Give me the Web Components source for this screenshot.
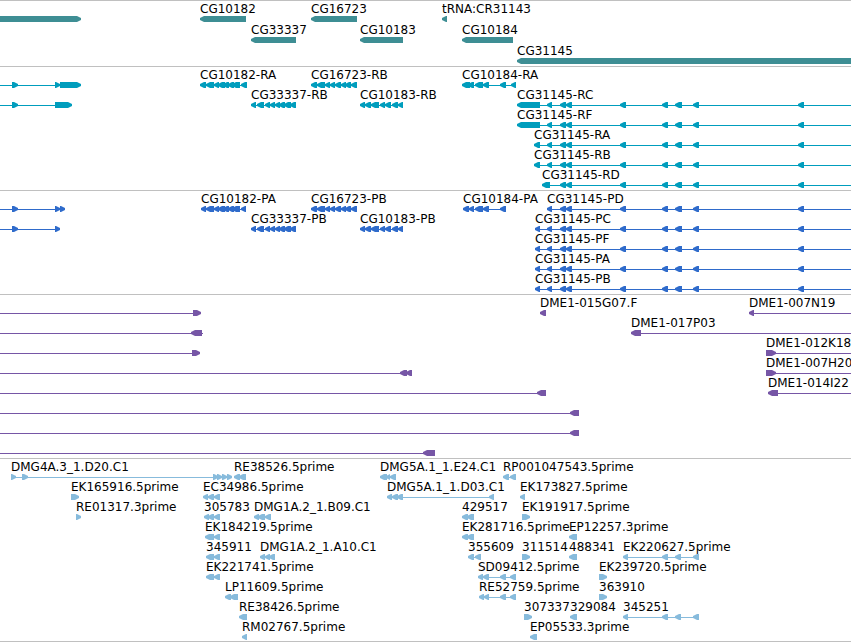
<!DOCTYPE html>
<html lang="en">
<head>
<meta charset="utf-8">
<title>Genome tracks</title>
<style>
	body{
		margin: 0;
		background: #fff;
		color: #000;
		font: 12px/16px "DejaVu Sans", sans-serif;
	}
</style>
</head>
<body>
<genome-browser>
	<genome-track color="#3e8e94" class="tall">
		<feature-row>
			<gene-feature dir="right" exons="-9-81"></gene-feature>
			<gene-feature exons="200-246">CG10182</gene-feature>
			<gene-feature exons="311-357">CG16723</gene-feature>
			<gene-feature exons="442-447">tRNA:CR31143</gene-feature>
		</feature-row>
		<feature-row>
			<gene-feature exons="251-296">CG33337</gene-feature>
			<gene-feature exons="360-403">CG10183</gene-feature>
			<gene-feature exons="462-513">CG10184</gene-feature>
		</feature-row>
		<feature-row>
			<gene-feature exons="517-edge">CG31145</gene-feature>
		</feature-row>
	</genome-track>

	<genome-track color="#009dbd">
		<feature-row>
			<gene-feature dir="right" from="0" exons="12-18 55-60 60-81"></gene-feature>
			<gene-feature exons="200-206 206-214 214-219 218-225 223-229 228-234 232-240 241-247">CG10182-RA</gene-feature>
			<gene-feature exons="311-317 317-325 325-330 330-335 335-341 341-346 345-351 351-357">CG16723-RB</gene-feature>
			<gene-feature exons="462-470 468-474 475-483 483-489 500-506 511-516">CG10184-RA</gene-feature>
		</feature-row>
		<feature-row>
			<gene-feature dir="right" from="0" exons="12-18 55-72"></gene-feature>
			<gene-feature exons="251-256 257-264 265-270 270-275 275-280 279-285 284-291 290-296">CG33337-RB</gene-feature>
			<gene-feature exons="360-365 365-371 371-379 380-385 385-391 392-398 398-403">CG10183-RB</gene-feature>
			<gene-feature to="edge" exons="517-540 547-552 560-566 566-572 620-626 662-668 675-682 693-699 798-804">CG31145-RC</gene-feature>
		</feature-row>
		<feature-row>
			<gene-feature to="edge" exons="517-540 547-552 560-566 566-572 620-626 662-668 675-682 693-699 798-804">CG31145-RF</gene-feature>
		</feature-row>
		<feature-row>
			<gene-feature to="edge" exons="534-540 547-552 560-566 566-572 620-626 662-668 675-682 693-699 798-804">CG31145-RA</gene-feature>
		</feature-row>
		<feature-row>
			<gene-feature to="edge" exons="534-540 547-552 560-566 566-572 620-626 662-668 675-682 693-699 798-804">CG31145-RB</gene-feature>
		</feature-row>
		<feature-row>
			<gene-feature to="edge" exons="542-550 560-566 566-572 620-626 662-668 675-682 693-699 798-804">CG31145-RD</gene-feature>
		</feature-row>
	</genome-track>

	<genome-track color="#2f6bcb">
		<feature-row>
			<gene-feature dir="right" from="0" exons="12-18 55-60 60-65"></gene-feature>
			<gene-feature exons="201-206 206-214 214-219 218-225 223-229 228-234 232-240 241-246">CG10182-PA</gene-feature>
			<gene-feature exons="311-317 317-325 325-330 330-335 335-341 341-346 345-351 351-357">CG16723-PB</gene-feature>
			<gene-feature exons="463-469 469-474 475-483 483-489 500-506">CG10184-PA</gene-feature>
			<gene-feature to="edge" exons="547-552 560-566 566-572 620-626 662-668 675-682 693-699 798-804">CG31145-PD</gene-feature>
		</feature-row>
		<feature-row>
			<gene-feature dir="right" from="0" exons="12-18 55-60"></gene-feature>
			<gene-feature exons="251-256 257-264 265-270 270-275 275-280 279-285 284-291 290-296">CG33337-PB</gene-feature>
			<gene-feature exons="360-365 365-371 371-379 380-385 385-391 392-398 398-403">CG10183-PB</gene-feature>
			<gene-feature to="edge" exons="535-540 547-552 560-566 566-572 620-626 662-668 675-682 693-699 798-804">CG31145-PC</gene-feature>
		</feature-row>
		<feature-row>
			<gene-feature to="edge" exons="535-540 547-552 560-566 566-572 620-626 662-668 675-682 693-699 798-804">CG31145-PF</gene-feature>
		</feature-row>
		<feature-row>
			<gene-feature to="edge" exons="535-540 547-552 560-566 566-572 620-626 662-668 675-682 693-699 798-804">CG31145-PA</gene-feature>
		</feature-row>
		<feature-row>
			<gene-feature to="edge" exons="535-540 547-552 560-566 566-572 620-626 662-668 675-682 693-699 798-804">CG31145-PB</gene-feature>
		</feature-row>
	</genome-track>

	<genome-track color="#7656a6">
		<feature-row>
			<gene-feature dir="right" from="0" exons="193-201"></gene-feature>
			<gene-feature exons="540-546">DME1-015G07.F</gene-feature>
			<gene-feature to="edge" exons="749-754">DME1-007N19</gene-feature>
		</feature-row>
		<feature-row>
			<gene-feature from="0" to="203" exons="191-202"></gene-feature>
			<gene-feature to="edge" exons="631-641">DME1-017P03</gene-feature>
		</feature-row>
		<feature-row>
			<gene-feature dir="right" from="0" exons="192-200"></gene-feature>
			<gene-feature dir="right" to="edge" exons="766-776">DME1-012K18</gene-feature>
		</feature-row>
		<feature-row>
			<gene-feature from="0" exons="400-407 406-412"></gene-feature>
			<gene-feature dir="right" to="edge" exons="766-776">DME1-007H20</gene-feature>
		</feature-row>
		<feature-row>
			<gene-feature from="0" exons="537-546"></gene-feature>
			<gene-feature to="edge" exons="768-778">DME1-014I22</gene-feature>
		</feature-row>
		<feature-row>
			<gene-feature from="0" exons="570-579"></gene-feature>
		</feature-row>
		<feature-row>
			<gene-feature from="0" exons="570-579"></gene-feature>
		</feature-row>
		<feature-row>
			<gene-feature from="0" exons="423-435"></gene-feature>
		</feature-row>
	</genome-track>

	<genome-track color="#87bbdc" class="last">
		<feature-row>
			<gene-feature dir="right" exons="11-16 22-28 213-218 217-222 222-227 227-232">DMG4A.3_1.D20.C1</gene-feature>
			<gene-feature exons="234-240 239-246">RE38526.5prime</gene-feature>
			<gene-feature exons="380-387 386-390 390-396">DMG5A.1_1.E24.C1</gene-feature>
			<gene-feature exons="503-509 510-516">RP001047543.5prime</gene-feature>
		</feature-row>
		<feature-row>
			<gene-feature dir="right" exons="71-79">EK165916.5prime</gene-feature>
			<gene-feature exons="203-208 208-214 214-220">EC34986.5prime</gene-feature>
			<gene-feature exons="387-392 392-398 397-403 489-494">DMG5A.1_1.D03.C1</gene-feature>
			<gene-feature exons="520-525">EK173827.5prime</gene-feature>
		</feature-row>
		<feature-row>
			<gene-feature dir="right" exons="76-81">RE01317.3prime</gene-feature>
			<gene-feature exons="204-209 208-214 214-220">305783</gene-feature>
			<gene-feature exons="254-259 258-265 265-271">DMG1A.2_1.B09.C1</gene-feature>
			<gene-feature exons="462-468 467-474">429517</gene-feature>
			<gene-feature dir="right" exons="522-530">EK191917.5prime</gene-feature>
		</feature-row>
		<feature-row>
			<gene-feature exons="205-214 214-220">EK184219.5prime</gene-feature>
			<gene-feature exons="462-468 467-474">EK281716.5prime</gene-feature>
			<gene-feature exons="569-577">EP12257.3prime</gene-feature>
		</feature-row>
		<feature-row>
			<gene-feature exons="206-214 214-220">345911</gene-feature>
			<gene-feature exons="260-265 265-270 269-275">DMG1A.2_1.A10.C1</gene-feature>
			<gene-feature exons="468-474 475-481">355609</gene-feature>
			<gene-feature dir="right" exons="522-530">311514</gene-feature>
			<gene-feature exons="569-577">488341</gene-feature>
			<gene-feature exons="623-628 662-668 675-681 693-699">EK220627.5prime</gene-feature>
		</feature-row>
		<feature-row>
			<gene-feature exons="206-214 214-220">EK221741.5prime</gene-feature>
			<gene-feature exons="478-483 483-489 500-506 510-516">SD09412.5prime</gene-feature>
			<gene-feature dir="right" exons="599-607">EK239720.5prime</gene-feature>
		</feature-row>
		<feature-row>
			<gene-feature exons="225-231 230-238">LP11609.5prime</gene-feature>
			<gene-feature exons="479-484 484-489 500-506 510-516">RE52759.5prime</gene-feature>
			<gene-feature dir="right" exons="599-607">363910</gene-feature>
		</feature-row>
		<feature-row>
			<gene-feature exons="239-247">RE38426.5prime</gene-feature>
			<gene-feature dir="right" exons="524-532">307337</gene-feature>
			<gene-feature exons="570-577">329084</gene-feature>
			<gene-feature exons="623-628 662-668 675-681 693-699">345251</gene-feature>
		</feature-row>
		<feature-row>
			<gene-feature exons="242-247">RM02767.5prime</gene-feature>
			<gene-feature exons="530-537">EP05533.3prime</gene-feature>
		</feature-row>
	</genome-track>
</genome-browser>

<script>
(function(d){

	function makeTemplate(html){
		const template = d.createElement('template');
		template.innerHTML = html;
		return template;
	}

	const browserTemplate = makeTemplate(`
	<style>
		:host{
			display: flex;
			flex-direction: column;
			border-bottom: 1px solid #c0c0c0;
		}
	</style>
	<slot></slot>
	`);

	const trackTemplate = makeTemplate(`
	<style>
		:host{
			display: flex;
			flex-direction: column;
			overflow: hidden;
			border-top: 1px solid #c0c0c0;
			padding-bottom: 3px;
			--row-height: 20px;
		}
		:host(.tall){
			padding-bottom: 2px;
			--row-height: 21px;
		}
		:host(.last){
			padding-bottom: 2px;
		}
	</style>
	<slot></slot>
	`);

	const rowTemplate = makeTemplate(`
	<style>
		:host{
			display: block;
			position: relative;
			height: var(--row-height);
		}
	</style>
	<slot></slot>
	`);

	// a feature is placed on the row by its base position
	const featureTemplate = makeTemplate(`
	<style>
		:host{
			display: block;
			position: absolute;
			inset: 0;
			pointer-events: none;
		}
		.name{
			position: absolute;
			top: 0;
			left: var(--start);
			white-space: nowrap;
			z-index: 1;
		}
		svg{
			position: absolute;
			top: 15px;
			left: 0;
			width: 100%;
			height: 6px;
			fill: var(--track-color);
		}
	</style>
	<svg aria-hidden="true"></svg>
	<span class="name"><slot></slot></span>
	`);


	class GenomeBrowser extends HTMLElement{
		constructor(){
			super();
			this.attachShadow({ mode: 'open' });
			this.shadowRoot.appendChild(browserTemplate.content.cloneNode(true));
		}
	}


	class GenomeTrack extends HTMLElement{
		constructor(){
			super();
			this.attachShadow({ mode: 'open' });
			this.shadowRoot.appendChild(trackTemplate.content.cloneNode(true));
		}

		connectedCallback(){
			this.style.setProperty('--track-color', this.getAttribute('color'));
		}
	}


	class FeatureRow extends HTMLElement{
		constructor(){
			super();
			this.attachShadow({ mode: 'open' });
			this.shadowRoot.appendChild(rowTemplate.content.cloneNode(true));
		}
	}


	class GeneFeature extends HTMLElement{
		constructor(){
			super();
			this.attachShadow({ mode: 'open' });
			this.shadowRoot.appendChild(featureTemplate.content.cloneNode(true));
			this.svg = this.shadowRoot.querySelector('svg');
		}

		connectedCallback(){
			this._draw();
		}

		//////////////////////
		// private methods

		_parseExons(){
			return this.getAttribute('exons').split(' ').map(part => {
				const m = part.match(/^(-?\d+)-(\d+|edge)$/);
				return { start: Number(m[1]), end: m[2] === 'edge' ? null : Number(m[2]) };
			});
		}

		_exonShape(exon){
			const start = exon.start;
			const end = exon.end;
			if(end === null){
				// body runs on to the edge of the track
				return `<path d="M${start} 2L${start + 4} 0V6L${start} 4Z"/><rect x="${start + 4}" y="0" width="100%" height="6"/>`;
			}
			if(this.direction === 'right'){
				return `<path d="M${end} 2L${end - 4} 0H${start}V6H${end - 4}L${end} 4Z"/>`;
			}
			return `<path d="M${start} 2L${start + 4} 0H${end}V6H${start + 4}L${start} 4Z"/>`;
		}

		_draw(){
			const exons = this._parseExons();
			const first = exons[0].start;
			const last = exons[exons.length - 1].end;
			const from = Number(this.getAttribute('from') || first);
			const to = this.getAttribute('to') || last;
			const width = to === 'edge' || to === null ? '100%' : to - from;

			this.style.setProperty('--start', first + 'px');
			this.svg.innerHTML =
				`<rect x="${from}" y="3" width="${width}" height="1"/>` +
				exons.map(exon => this._exonShape(exon)).join('');
		}

		//////////////////////
		// getters and setters
		get direction(){
			return this.getAttribute('dir') || 'left';
		}
	}

	window.customElements.define('genome-browser', GenomeBrowser);
	window.customElements.define('genome-track', GenomeTrack);
	window.customElements.define('feature-row', FeatureRow);
	window.customElements.define('gene-feature', GeneFeature);

})(document);
</script>
</body>
</html>
